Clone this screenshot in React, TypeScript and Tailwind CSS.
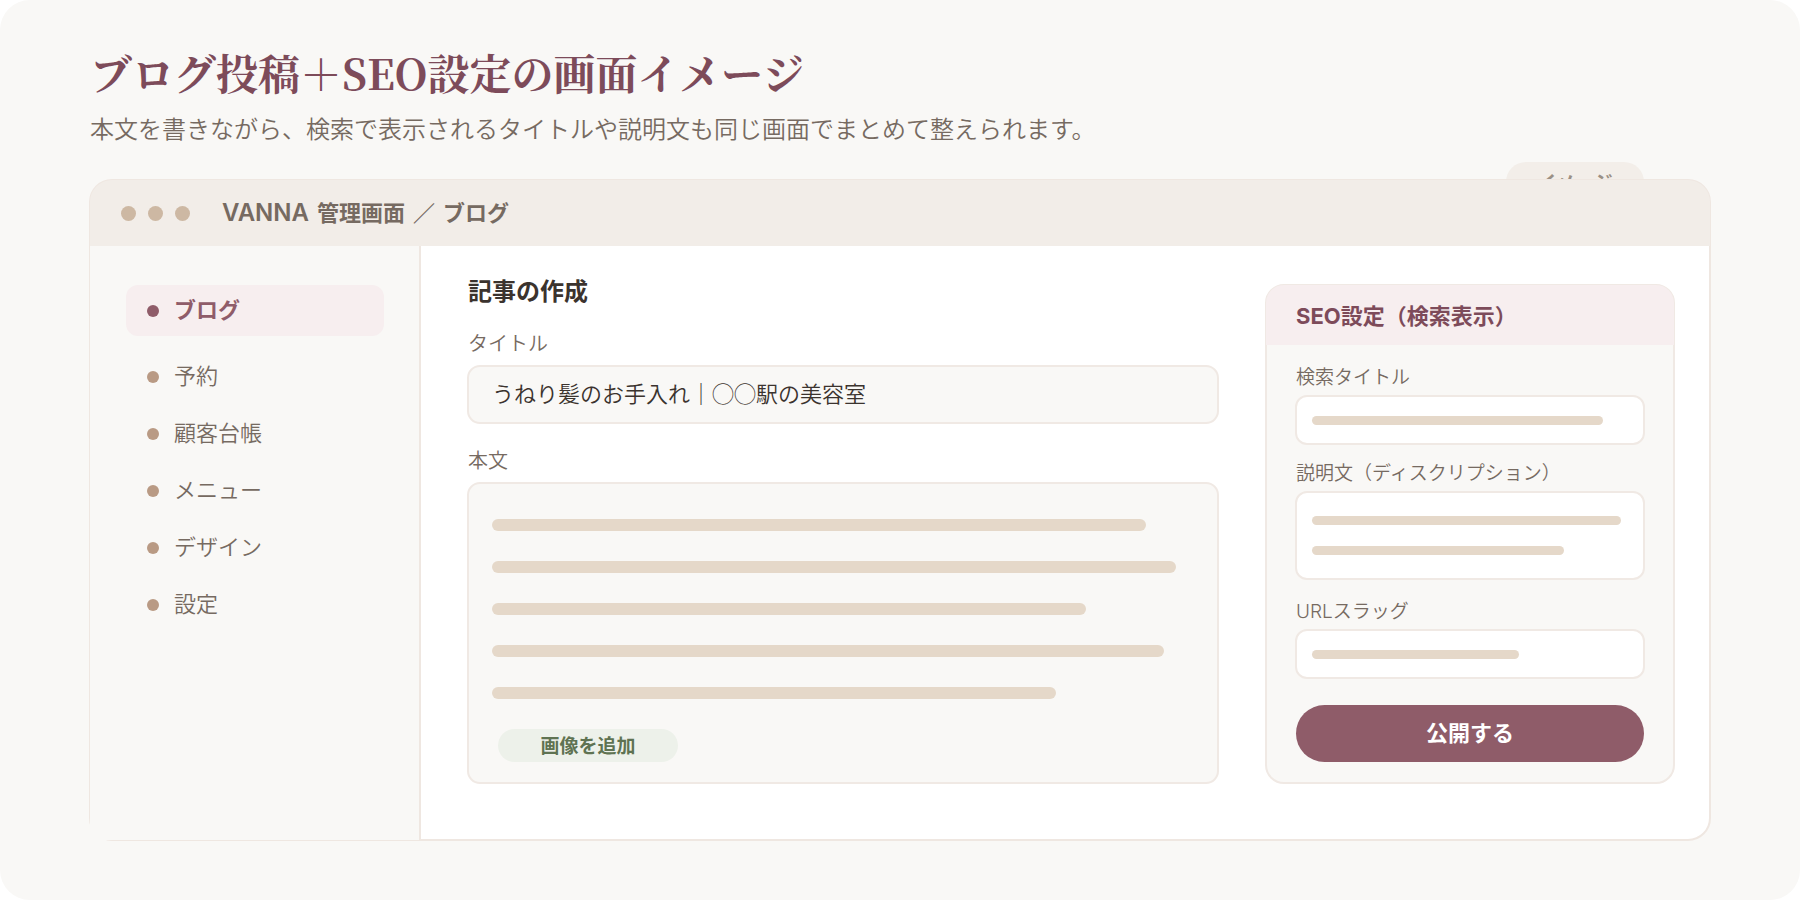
import { useState } from 'react';

const navItems = ['ブログ', '予約', '顧客台帳', 'メニュー', 'デザイン', '設定'];

// Line lengths in percent of the field they sit in
const bodyLines = [93.2, 97.5, 84.6, 95.7, 80.3];

const seoFields = [
  { id: 'seoTitle', label: '検索タイトル', lines: [92], fieldClass: 'h-[50px]', labelClass: 'mt-[19px]' },
  { id: 'seoDescription', label: '説明文（ディスクリプション）', lines: [97.8, 79.7], fieldClass: 'h-[89px]', labelClass: 'mt-[15px]' },
  { id: 'seoSlug', label: 'URLスラッグ', lines: [65.5], fieldClass: 'h-[50px]', labelClass: 'mt-[18px]' },
];

export default function App() {
  const [active, setActive] = useState('ブログ');
  const [title, setTitle] = useState('うねり髪のお手入れ｜◯◯駅の美容室');

  return (
    <div className="bg-white font-['Inter','Noto_Sans_CJK_JP',sans-serif] font-[350] text-[#766a61]">
      <div className="flex min-h-screen flex-col rounded-[30px] bg-[#f9f8f6] px-[89px] pt-[42px] pb-[59px]">
        <header className="pl-px">
          <h1 className="text-[42px] leading-[60px] font-bold text-[#7d4b5a] font-['Noto_Serif_CJK_JP','Noto_Sans_CJK_JP',serif]">
            ブログ投稿＋SEO設定の画面イメージ
          </h1>
          <p className="mt-[10px] mb-[31px] text-2xl leading-9">
            本文を書きながら、検索で表示されるタイトルや説明文も同じ画面でまとめて整えられます。
          </p>
        </header>

        <div className="relative flex flex-1 flex-col">
          {/* Tab that sticks out from behind the window */}
          <div className="absolute -top-[17px] right-[67px] h-10 w-[138px] rounded-full bg-[#f3eee9] pt-2 text-center text-[19px] leading-7 font-bold text-[#9b9085]">
            イメージ
          </div>

          <div className="relative flex flex-1 flex-col rounded-[23px] border-2 border-[#efe7e1] bg-white">
            <div className="-mx-px -mt-px flex h-[66px] items-center rounded-t-[22px] bg-[#f2ede8] pl-[31px]">
              <div className="flex gap-3">
                <span className="size-[15px] rounded-full bg-[#cdb8a3]" />
                <span className="size-[15px] rounded-full bg-[#cdb8a3]" />
                <span className="size-[15px] rounded-full bg-[#cdb8a3]" />
              </div>
              <div className="ml-8 flex items-baseline gap-2 text-[22px] leading-8 font-bold">
                <span className="text-2xl leading-8 font-semibold">VANNA</span>
                <span>管理画面</span>
                <span>／</span>
                <span>ブログ</span>
              </div>
            </div>

            <div className="flex flex-1">
              {/* Sidebar */}
              <nav className="-mb-px -ml-px w-[331px] shrink-0 border-r-2 border-[#efe7e1] bg-[#f9f8f6] pt-[39px] pr-[35px] pl-9">
                {navItems.map((item) => (
                  <button
                    key={item}
                    type="button"
                    onClick={() => setActive(item)}
                    className={
                      item === active
                        ? 'mb-3 flex h-[51px] w-full items-center gap-[15px] rounded-xl bg-[#f7eeef] pl-[21px] text-[22px] font-bold text-[#8f5c69]'
                        : 'flex h-[57px] w-full items-center gap-[15px] pl-[21px] text-[22px]'
                    }
                  >
                    <span
                      className={
                        item === active
                          ? 'size-3 rounded-full bg-[#8f5c69]'
                          : 'size-3 rounded-full bg-[#b99a84]'
                      }
                    />
                    {item}
                  </button>
                ))}
              </nav>

              <main className="flex min-w-0 flex-1 items-start gap-[46px] pr-[34px] pl-[46px]">
                {/* Editor */}
                <section className="min-w-0 flex-1 pt-[30px]">
                  <h2 className="pl-px text-2xl leading-8 font-bold text-[#3b332e]">記事の作成</h2>

                  <label htmlFor="title" className="mt-[22px] mb-[7px] block pl-px text-xl leading-7">
                    タイトル
                  </label>
                  <input
                    id="title"
                    type="text"
                    value={title}
                    onChange={(e) => setTitle(e.target.value)}
                    className="block h-[59px] w-full rounded-[13px] border-2 border-[#f0e9e4] bg-[#f9f8f6] px-[23px] pb-[6px] text-[22px] text-[#3b332e] font-['Noto_Sans_CJK_JP',sans-serif]"
                  />

                  <label htmlFor="body" className="mt-[23px] mb-[7px] block pl-px text-xl leading-7">
                    本文
                  </label>
                  <div className="relative">
                    <textarea
                      id="body"
                      className="block h-[302px] w-full resize-none rounded-[13px] border-2 border-[#f0e9e4] bg-[#f9f8f6]"
                    />
                    <div className="pointer-events-none absolute inset-x-[25px] top-[37px] space-y-[30px]">
                      {bodyLines.map((width) => (
                        <div key={width} className="h-3 rounded-full bg-[#e5d8c9]" style={{ width: `${width}%` }} />
                      ))}
                    </div>
                    <button
                      type="button"
                      className="absolute bottom-[22px] left-[31px] h-[33px] w-[180px] rounded-full bg-[#edf1ea] text-[19px] leading-[35px] font-bold text-[#5f7352]"
                    >
                      画像を追加
                    </button>
                  </div>
                </section>

                {/* SEO panel */}
                <section className="mt-[38px] w-[410px] shrink-0 rounded-[19px] border-2 border-[#f0e9e4] bg-[#f9f8f6]">
                  <h2 className="-mx-px -mt-px h-[60px] rounded-t-[18px] bg-[#f7eeef] pl-[30px] text-[22px] leading-[62px] font-bold text-[#7d4b5a]">
                    SEO設定（検索表示）
                  </h2>
                  <div className="px-7 pb-5">
                    {seoFields.map((field) => (
                      <div key={field.id} className={field.labelClass}>
                        <label htmlFor={field.id} className="mb-[3px] block pl-px text-[19px] leading-7">
                          {field.label}
                        </label>
                        <div className="relative">
                          {field.lines.length > 1 ? (
                            <textarea
                              id={field.id}
                              className={`block w-full resize-none rounded-xl border-2 border-[#f0e9e4] bg-white ${field.fieldClass}`}
                            />
                          ) : (
                            <input
                              id={field.id}
                              type="text"
                              className={`block w-full rounded-xl border-2 border-[#f0e9e4] bg-white ${field.fieldClass}`}
                            />
                          )}
                          <div className="pointer-events-none absolute inset-x-[17px] inset-y-0 flex flex-col justify-center gap-[21px]">
                            {field.lines.map((width) => (
                              <div key={width} className="h-[9px] rounded-full bg-[#e5d8c9]" style={{ width: `${width}%` }} />
                            ))}
                          </div>
                        </div>
                      </div>
                    ))}
                    <div className="mt-[26px] px-px">
                      <button
                        type="button"
                        className="block h-[57px] w-full rounded-full bg-[#8f5c69] text-[22px] font-bold text-white"
                      >
                        公開する
                      </button>
                    </div>
                  </div>
                </section>
              </main>
            </div>
          </div>
        </div>
      </div>
    </div>
  );
}
